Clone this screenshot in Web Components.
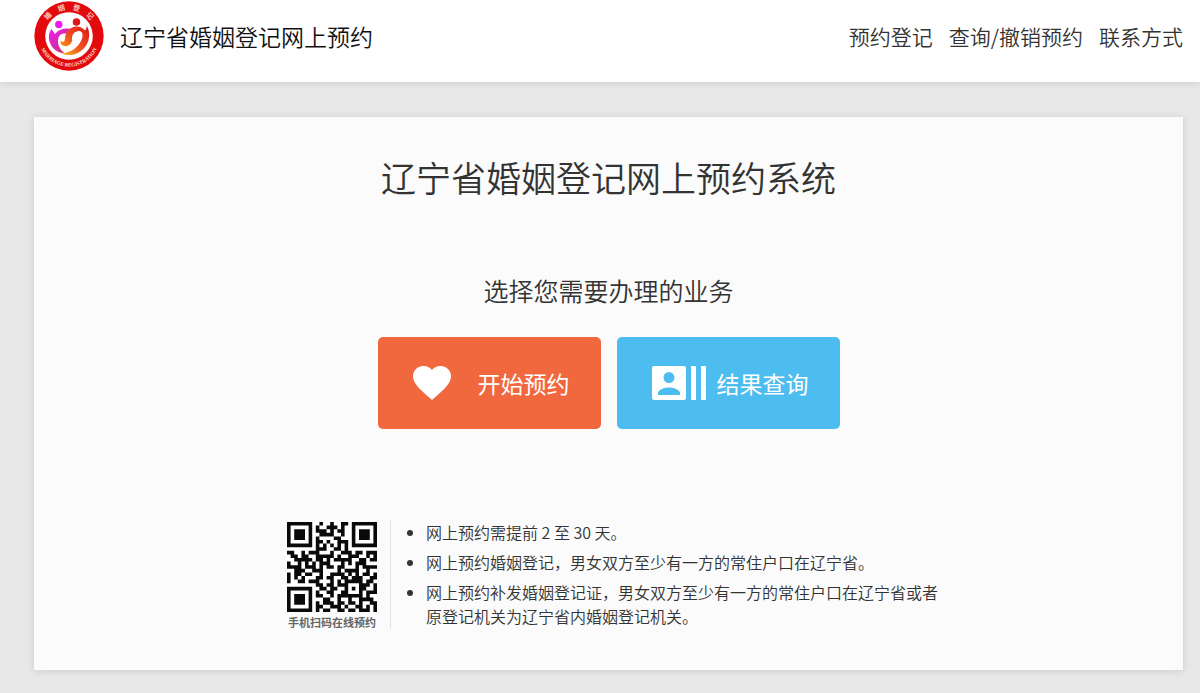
<!DOCTYPE html>
<html lang="zh-CN">
<head>
<meta charset="utf-8">
<meta name="viewport" content="width=device-width, initial-scale=1">
<title>辽宁省婚姻登记网上预约</title>
<style>
  :root {
    --color-text: #333;
    --color-page: #e8e8e8;
    --color-card: #fbfbfb;
    --color-primary: #f1683f;
    --color-info: #4dbcef;
  }
  body {
    margin: 0;
    min-height: 100vh;
    background: var(--color-page);
    color: var(--color-text);
    font-family: "Noto Sans CJK SC", "Noto Sans", sans-serif;
    font-weight: 350;
  }
</style>
</head>
<body>
<booking-page></booking-page>

<script>
/** Round emblem of the marriage registry. */
class RegistryLogo extends HTMLElement {
  constructor() {
    super();
    this.attachShadow({ mode: 'open' }).innerHTML = /* html */ `
      <style>
        :host { display: block; width: 70px; height: 70px; }
        svg { display: block; width: 100%; height: 100%; }
        text { fill: #ffe3dc; font-weight: 500; }
        .cn { font-size: 21px; }
        .en { font-family: "Liberation Serif", serif; font-size: 15px; font-weight: 700; }
      </style>
      <svg viewBox="0 0 206 206" role="img" aria-label="婚姻登记">
        <defs>
          <linearGradient id="left" x1="0" y1="0" x2="1" y2="1">
            <stop offset="0" stop-color="#f01cf0"/>
            <stop offset=".55" stop-color="#d42aa8"/>
            <stop offset="1" stop-color="#e8402c"/>
          </linearGradient>
          <linearGradient id="right" x1="1" y1="0" x2="0" y2="1">
            <stop offset="0" stop-color="#dc1414"/>
            <stop offset=".5" stop-color="#f04a20"/>
            <stop offset="1" stop-color="#fcb414"/>
          </linearGradient>
          <path id="top" d="M25 103a78 78 0 0 1 156 0"/>
          <path id="bottom" d="M13 103a90 90 0 0 0 180 0"/>
        </defs>
        <circle cx="103" cy="103" r="102" fill="#e20a0c"/>
        <circle cx="103" cy="103" r="70" fill="#fff"/>
        <circle cx="73" cy="69" r="11" fill="#ee1cee"/>
        <circle cx="125" cy="62" r="11" fill="#dc1818"/>
        <path fill="url(#left)" d="M52 82C40 97 41 121 56 138c9 10 22 16 34 16-16-14-23-31-18-46 4-12 17-16 30-8 2-7 6-12 11-16-19-7-40-2-51 13-4-4-8-9-10-15z"/>
        <path fill="url(#right)" d="M155 72c13 21 9 51-10 69-17 17-41 22-64 14 22-2 42-14 53-30 11-16 13-35 0-37-13-1-23 10-22 23 1 11-6 20-17 22-11 1-18-6-17-15 8 5 13 1 13-8 1-20 16-35 34-35 12 0 20 5 25 12 4-4 6-9 5-15z"/>
        <text class="cn"><textPath href="#top" startOffset="50%" text-anchor="middle">婚　姻　登　记</textPath></text>
        <text class="en"><textPath href="#bottom" startOffset="50%" text-anchor="middle">MARRIAGE REGISTRATION</textPath></text>
      </svg>
    `;
  }
}
customElements.define('registry-logo', RegistryLogo);

class SiteHeader extends HTMLElement {
  constructor() {
    super();
    this.attachShadow({ mode: 'open' }).innerHTML = /* html */ `
      <style>
        :host {
          display: flex;
          align-items: center;
          gap: 16px;
          padding: 1px 17px 11px 34px;
          background: #fff;
          box-shadow: 0 1px 8px rgba(0, 0, 0, .12);
        }
        .title { color: #111; font-size: 23px; line-height: 32px; }
        nav { display: flex; gap: 16px; margin-left: auto; }
      </style>
      <registry-logo></registry-logo>
      <span class="title"><slot name="title"></slot></span>
      <nav><slot></slot></nav>
    `;
  }
}
customElements.define('site-header', SiteHeader);

class NavLink extends HTMLElement {
  constructor() {
    super();
    this.attachShadow({ mode: 'open' }).innerHTML = /* html */ `
      <style>
        :host { display: block; }
        a { color: inherit; font-size: 21px; line-height: 32px; text-decoration: none; white-space: nowrap; }
        a:hover { color: var(--color-primary); }
      </style>
      <a href="#"><slot></slot></a>
    `;
  }

  connectedCallback() {
    this.shadowRoot.querySelector('a').href = this.getAttribute('href') || '#';
  }
}
customElements.define('nav-link', NavLink);

const ACTION_ICONS = {
  heart: `
    <svg width="38" height="34" viewBox="2 3 20 18.35" preserveAspectRatio="none" aria-hidden="true">
      <path fill="currentColor" d="M12 21.35l-1.45-1.32C5.4 15.36 2 12.28 2 8.5 2 5.42 4.42 3 7.5 3c1.74 0 3.41.81 4.5 2.09C13.09 3.81 14.76 3 16.5 3 19.58 3 22 5.42 22 8.5c0 3.78-3.4 6.86-8.55 11.54L12 21.35z"/>
    </svg>`,
  contact: `
    <svg width="55" height="34" viewBox="0 0 55 34" aria-hidden="true">
      <path fill="currentColor" fill-rule="evenodd" d="M2 0h30a2 2 0 0 1 2 2v30a2 2 0 0 1-2 2H2a2 2 0 0 1-2-2V2a2 2 0 0 1 2-2zm15 6a5.500 5.500 0 1 0 0 11 5.500 5.500 0 0 0 0-11zM6 29h22v-2c0-3.500-7-5.500-11-5.500S6 23.500 6 27z"/>
      <path fill="currentColor" d="M39 0h5v34h-5zM49 0h5v34h-5z"/>
    </svg>`,
};

/**
 * @attr {string} icon  heart | contact
 * @attr {string} tone  primary | info
 */
class ActionButton extends HTMLElement {
  constructor() {
    super();
    this.attachShadow({ mode: 'open' });
  }

  connectedCallback() {
    const tone = this.getAttribute('tone') || 'primary';
    this.shadowRoot.innerHTML = /* html */ `
      <style>
        :host { display: block; }
        button {
          display: grid;
          grid-template-columns: 65px auto;
          align-items: center;
          padding: 29px 31px 29px 35px;
          border: 0;
          border-radius: 5px;
          background: var(--color-${tone});
          color: #fff;
          font: inherit;
          font-size: 23px;
          font-weight: 400;
          line-height: 32px;
          text-align: left;
          white-space: nowrap;
          cursor: pointer;
        }
        .icon { display: flex; align-items: center; height: 34px; }
        svg { flex: none; }
      </style>
      <button type="button">
        <span class="icon">${ACTION_ICONS[this.getAttribute('icon')] || ''}</span>
        <slot></slot>
      </button>
    `;
  }
}
customElements.define('action-button', ActionButton);

// One string per row, # is a dark module.
const QR_ROWS = [
  '#######..#..#..##.#######',
  '#.....#.#..###.#..#.....#',
  '#.###.#.###.#.##..#.###.#',
  '#.###.#..####..#..#.###.#',
  '#.###.#.#....##...#.###.#',
  '#.....#.##.#..###.#.....#',
  '#######.#.#.#.#.#.#######',
  '........###..##.#........',
  '##..#.###...#..###.##.###',
  '.##.##..#####.#..###..#.#',
  '..#####.##.#.#####..##.##',
  '#..#.#.#.###...#.#.###...',
  '####.###.#.##.##...#.####',
  '..###..###....#.####..#..',
  '#.##.##..#..####.#.#.##.#',
  '#.#.#...##.##..##.###..##',
  '#..##.###...#.#.#####.##.',
  '........##.##.###...###.#',
  '#######..##.##..#.#.##..#',
  '#.....#.#..##..##...#.###',
  '#.###.#.##..#.#######.#..',
  '#.###.#...##..#..#..####.',
  '#.###.#.#.###.##.##.#..##',
  '#.....#.##..###.#..##.#.#',
  '#######.#.##..##.##.###.#',
];

class QrCode extends HTMLElement {
  constructor() {
    super();
    const modules = QR_ROWS.map((row, y) =>
      [...row].map((cell, x) => (cell === '#' ? `M${x} ${y}h1v1h-1z` : '')).join('')
    ).join('');
    this.attachShadow({ mode: 'open' }).innerHTML = /* html */ `
      <style>
        :host { display: block; }
        figure { margin: 0; }
        svg { display: block; width: 90px; height: 90px; background: #fff; }
        figcaption {
          margin-top: 3px;
          color: #666;
          font-size: 11px;
          font-weight: 700;
          line-height: 14px;
          text-align: center;
          white-space: nowrap;
        }
      </style>
      <figure>
        <svg viewBox="0 0 25 25" role="img" aria-label="二维码"><path fill="#0a0a0a" d="${modules}"/></svg>
        <figcaption><slot></slot></figcaption>
      </figure>
    `;
  }
}
customElements.define('qr-code', QrCode);

/** QR code on the left of a rule, booking notes on the right. */
class BookingNotes extends HTMLElement {
  constructor() {
    super();
    this.attachShadow({ mode: 'open' }).innerHTML = /* html */ `
      <style>
        :host { display: flex; justify-content: center; }
        .code { padding: 2px 13px 0; border-right: 1px solid #e2e2e2; }
        ul {
          max-width: 517px;
          margin: 0;
          padding: 0 0 0 35px;
          font-size: 16px;
          line-height: 24px;
        }
        li + li { margin-top: 6px; }
      </style>
      <div class="code"><qr-code>手机扫码在线预约</qr-code></div>
      <ul>
        <li>网上预约需提前 2 至 30 天。</li>
        <li>网上预约婚姻登记，男女双方至少有一方的常住户口在辽宁省。</li>
        <li>网上预约补发婚姻登记证，男女双方至少有一方的常住户口在辽宁省或者原登记机关为辽宁省内婚姻登记机关。</li>
      </ul>
    `;
  }
}
customElements.define('booking-notes', BookingNotes);

class BookingPage extends HTMLElement {
  constructor() {
    super();
    this.attachShadow({ mode: 'open' }).innerHTML = /* html */ `
      <style>
        :host { display: block; }
        main { padding: 35px 17px 23px 34px; }
        .card {
          padding: 36px 16px 41px;
          background: var(--color-card);
          box-shadow: 0 1px 8px rgba(0, 0, 0, .12);
          text-align: center;
        }
        h1, h2 { margin: 0; font-weight: 350; }
        h1 { font-size: 35px; line-height: 48px; }
        h2 { margin-top: 71px; font-size: 25px; line-height: 36px; }
        .actions { display: flex; flex-wrap: wrap; justify-content: center; gap: 16px; margin: 29px 0 91px; }
        booking-notes { text-align: left; }
      </style>
      <site-header>
        <span slot="title">辽宁省婚姻登记网上预约</span>
        <nav-link href="#book">预约登记</nav-link>
        <nav-link href="#query">查询/撤销预约</nav-link>
        <nav-link href="#contact">联系方式</nav-link>
      </site-header>
      <main>
        <section class="card">
          <h1>辽宁省婚姻登记网上预约系统</h1>
          <h2>选择您需要办理的业务</h2>
          <div class="actions">
            <action-button icon="heart" tone="primary">开始预约</action-button>
            <action-button icon="contact" tone="info">结果查询</action-button>
          </div>
          <booking-notes></booking-notes>
        </section>
      </main>
    `;
  }
}
customElements.define('booking-page', BookingPage);
</script>
</body>
</html>
